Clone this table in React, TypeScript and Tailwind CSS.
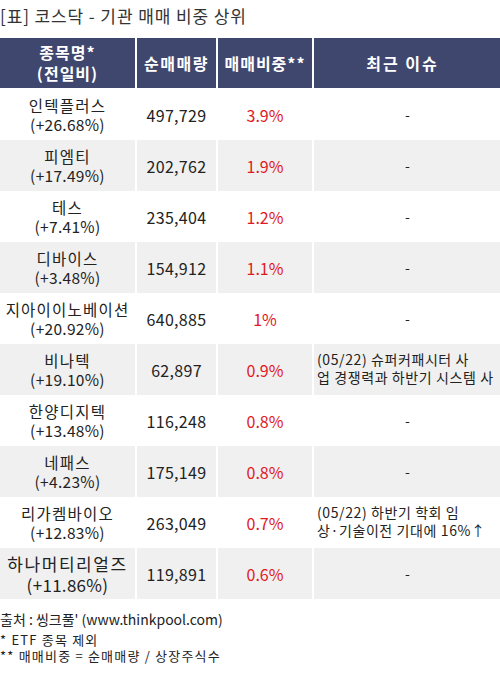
const rows = [
  { name: "인텍플러스", chg: "+26.68%", vol: "497,729", ratio: "3.9%", issue: null },
  { name: "피엠티", chg: "+17.49%", vol: "202,762", ratio: "1.9%", issue: null },
  { name: "테스", chg: "+7.41%", vol: "235,404", ratio: "1.2%", issue: null },
  { name: "디바이스", chg: "+3.48%", vol: "154,912", ratio: "1.1%", issue: null },
  { name: "지아이이노베이션", chg: "+20.92%", vol: "640,885", ratio: "1%", issue: null },
  { name: "비나텍", chg: "+19.10%", vol: "62,897", ratio: "0.9%", issue: ["(05/22) 슈퍼커패시터 사", "업 경쟁력과 하반기 시스템 사"] },
  { name: "한양디지텍", chg: "+13.48%", vol: "116,248", ratio: "0.8%", issue: null },
  { name: "네패스", chg: "+4.23%", vol: "175,149", ratio: "0.8%", issue: null },
  { name: "리가켐바이오", chg: "+12.83%", vol: "263,049", ratio: "0.7%", issue: ["(05/22) 하반기 학회 임", "상·기술이전 기대에 16%↑"] },
  { name: "하나머티리얼즈", chg: "+11.86%", vol: "119,891", ratio: "0.6%", issue: null, big: true },
];

export default function App() {
  return (
    <div
      className="w-[500px] h-[675px] bg-white text-[#222] overflow-hidden"
      style={{ fontFamily: '"Noto Sans CJK KR", "Noto Sans", sans-serif' }}
    >
      <h1 className="pt-[5px] h-[38px] text-[17px] leading-[22px] tracking-[0.9px] text-[#333] font-normal">
        [표] 코스닥 - 기관 매매 비중 상위
      </h1>

      <div className="grid grid-cols-[135px_79px_94px_187px] gap-x-[2px] w-[497px]">
        <div className="h-[50px] bg-[#40476f] text-white font-bold text-[16px] leading-[21px] tracking-[1px] flex flex-col items-center justify-center">
          <span>종목명*</span>
          <span>(전일비)</span>
        </div>
        <div className="h-[50px] bg-[#40476f] text-white font-bold text-[16px] tracking-[1.5px] flex items-center justify-center">
          순매매량
        </div>
        <div className="h-[50px] bg-[#40476f] text-white font-bold text-[16px] tracking-[1px] flex items-center justify-center">
          매매비중**
        </div>
        <div className="h-[50px] bg-[#40476f] text-white font-bold text-[16px] tracking-[2px] flex items-center justify-center pr-[10px]">
          최근&nbsp;이슈
        </div>

        {rows.map((r, i) => {
          const bg = i % 2 === 1 ? "bg-[#f0f0f0]" : "bg-white";
          const first = i === 0 ? "mt-[1px]" : "";
          return (
            <div key={r.name} className="contents">
              <div
                className={`${bg} ${first} h-[51px] flex flex-col items-center justify-center ${
                  r.big ? "text-[17px] leading-[21px]" : "text-[15.5px] leading-[19px]"
                }`}
              >
                <span className={`whitespace-nowrap ${r.big ? "tracking-[1.6px]" : "tracking-[1.2px]"}`}>{r.name}</span>
                <span className="tracking-[0.3px]">({r.chg})</span>
              </div>
              <div className={`${bg} ${first} h-[51px] flex items-center justify-center text-[16px] tracking-[0.3px]`}>
                {r.vol}
              </div>
              <div className={`${bg} ${first} h-[51px] flex items-center justify-center text-[16px] text-[#e0191f]`}>
                {r.ratio}
              </div>
              <div className={`${bg} ${first} h-[51px] overflow-hidden`}>
                {r.issue ? (
                  <div className="pl-[3px] pt-[6px] text-[14px] leading-[18px] tracking-[0.6px] whitespace-nowrap">
                    <div>{r.issue[0]}</div>
                    <div>{r.issue[1]}</div>
                  </div>
                ) : (
                  <div className="h-full flex items-center justify-center text-[14px]">-</div>
                )}
              </div>
            </div>
          );
        })}
      </div>

      <div className="pt-[10px] text-[14px] leading-[20px]">출처 : 씽크풀' (www.thinkpool.com)</div>
      <div className="pt-[3px] text-[13px] leading-[16px] tracking-[1.2px]">
        <div>* ETF 종목 제외</div>
        <div>** 매매비중 = 순매매량 / 상장주식수</div>
      </div>
    </div>
  );
}
